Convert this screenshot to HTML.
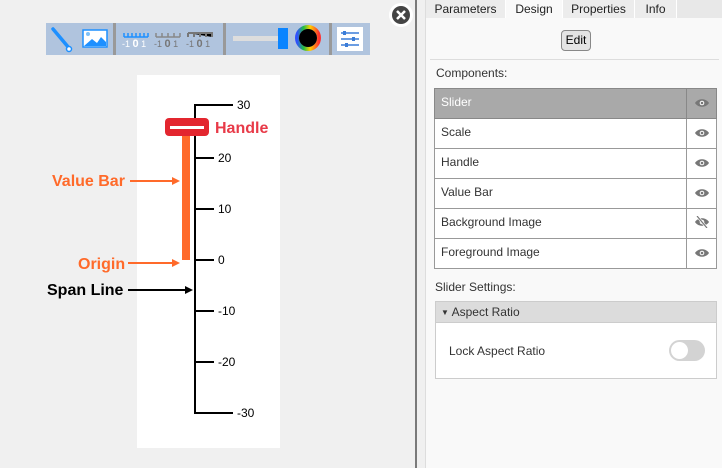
<!DOCTYPE html><html><head><style>
*{margin:0;padding:0;box-sizing:border-box}
body{width:722px;height:468px;overflow:hidden;background:#f0f0f0;font-family:"Liberation Sans",sans-serif;position:relative}
.abs{position:absolute}
#rp{left:425px;top:0;width:297px;height:468px;background:#f9f9f9;border-left:1px solid #ddd}
.tabs{position:absolute;left:0;top:0;width:297px;height:18px;background:#e8e8e8}
.tab{position:absolute;top:0;height:18px;font-size:12px;line-height:18px;text-align:center;color:#222;background:#ececec;border-right:1px solid #fff}
table{border-collapse:collapse;position:absolute;left:8px;top:88px;width:283px;font-size:12px}
td{border:1px solid #999;height:30px;background:#fff;color:#333;padding-left:6px;padding-bottom:3px}
td.e{width:30px;padding:0;text-align:center}
tr.sel td{background:#a9a9a9;color:#fff;border-color:#888}
</style></head><body>
<svg class="abs" style="left:0;top:0" width="422" height="468">
<rect x="415" y="0" width="2" height="468" fill="#7a7a7a"/>
<rect x="46" y="23" width="324" height="32" fill="#b0c4de"/>
<rect x="113" y="23" width="3" height="32" fill="#999"/><rect x="223" y="23" width="3" height="32" fill="#999"/><rect x="329" y="23" width="3" height="32" fill="#999"/>
<path d="M53 29 L69 48" stroke="#1e90ff" stroke-width="3.5" stroke-linecap="round"/><circle cx="69" cy="49" r="2.5" fill="#fff" stroke="#1e90ff" stroke-width="1.5"/>
<rect x="83" y="30" width="24" height="17" fill="#fff" stroke="#1e90ff" stroke-width="1.5"/><path d="M84 46 L92 39 L97 43 L101 37 L106 42 L106 46Z" fill="#1e90ff"/><circle cx="88" cy="34" r="2" fill="#7ec0f8"/>
<g font-size="9" font-family="Liberation Sans"><path d="M124 37h24M124 33v4M128 33v4M132 33v4M136 33v4M140 33v4M144 33v4M148 33v4" stroke="#1e90ff" stroke-width="1.5"/><text x="122" y="47" fill="#fff">-1 <tspan font-size="11" font-weight="bold">0</tspan> 1</text>
<path d="M156 37h24M156 33v4M162 33v4M168 33v4M174 33v4M180 33v4" stroke="#888" stroke-width="1.5"/><text x="154" y="47" fill="#777">-1 <tspan font-size="11" font-weight="bold">0</tspan> 1</text>
<path d="M188 33h24v4M188 33v4M194 33v4M200 33v4M206 33v4" stroke="#777" stroke-width="2"/><text x="186" y="47" fill="#777">-1 <tspan font-size="11" font-weight="bold">0</tspan> 1</text></g>
<rect x="233" y="36" width="48" height="5" fill="#ddd"/><rect x="278" y="28" width="10" height="21" fill="#0a84ff"/>
<circle cx="308" cy="38" r="11" fill="none" stroke="url(#g)" stroke-width="4"/>
<defs><linearGradient id="g"><stop offset="0" stop-color="#3050ff"/><stop offset=".3" stop-color="#20c040"/><stop offset=".6" stop-color="#ffd000"/><stop offset="1" stop-color="#ff3030"/></linearGradient></defs>
<circle cx="308" cy="38" r="9" fill="#000"/>
<rect x="337" y="27" width="26" height="24" fill="#fff"/><path d="M341 33h18M341 39h18M341 45h18" stroke="#3b7dd8" stroke-width="1.5"/><rect x="343" y="31" width="3" height="4" fill="#3b7dd8"/><rect x="352" y="37" width="3" height="4" fill="#3b7dd8"/><rect x="345" y="43" width="3" height="4" fill="#3b7dd8"/>
<circle cx="401" cy="15" r="12" fill="#fff"/><circle cx="401" cy="15" r="9" fill="#444"/><path d="M397 11l8 8M405 11l-8 8" stroke="#fff" stroke-width="2.5"/>
<rect x="137" y="75" width="143" height="373" fill="#fff"/>
<g stroke="#000" stroke-width="2"><path d="M195 104V414M194 105h39M194 413h39M194 158h20M194 209h20M194 260h20M194 311h20M194 362h20"/></g>
<g font-size="12" font-family="Liberation Sans"><text x="237" y="109">30</text><text x="218" y="162">20</text><text x="218" y="213">10</text><text x="218" y="264">0</text><text x="218" y="315">-10</text><text x="218" y="366">-20</text><text x="237" y="417">-30</text></g>
<rect x="182" y="133" width="8" height="127" fill="#ff6a2a"/>
<rect x="165" y="118" width="44" height="18" rx="4" fill="#e3262f"/><rect x="170" y="126" width="34" height="3" fill="#fff"/>
<g font-size="16" font-weight="bold" font-family="Liberation Sans"><text x="215" y="133" fill="#e83a48">Handle</text><text x="52" y="186" fill="#ff6a2a">Value Bar</text><text x="78" y="269" fill="#ff6a2a">Origin</text><text x="47" y="295" fill="#000">Span Line</text></g>
<path d="M130 181h45" stroke="#ff6a2a" stroke-width="2"/><path d="M180 181l-8-4v8z" fill="#ff6a2a"/>
<path d="M128 263h46" stroke="#ff6a2a" stroke-width="2"/><path d="M180 263l-8-4v8z" fill="#ff6a2a"/>
<path d="M128 290h58" stroke="#000" stroke-width="2"/><path d="M193 290l-8-4v8z" fill="#000"/>
</svg>
<div id="rp" class="abs">
<div class="tabs"><div class="tab" style="left:0;width:80px">Parameters</div><div class="tab" style="left:80px;width:57px;background:#f9f9f9">Design</div><div class="tab" style="left:137px;width:72px">Properties</div><div class="tab" style="left:209px;width:42px">Info</div></div>
<div class="abs" style="left:135px;top:30px;width:30px;height:21px;border:1px solid #888;border-radius:4px;background:#e4e4e4;font-size:12px;text-align:center;line-height:19px">Edit</div>
<div class="abs" style="left:4px;top:59px;width:289px;height:1px;background:#ddd"></div>
<div class="abs" style="left:10px;top:66px;font-size:12px;color:#333">Components:</div>
<svg width="0" height="0" style="position:absolute"><defs><g id="eye"><path d="M0 5C3 0 11 0 14 5C11 10 3 10 0 5Z" fill="#777"/><circle cx="7" cy="5" r="2.3" fill="#fff"/><circle cx="7" cy="5" r="1.3" fill="#777"/></g></defs></svg>
<table>
<tr class="sel"><td>Slider</td><td class="e"><svg width="14" height="10"><use href="#eye"/></svg></td></tr>
<tr><td>Scale</td><td class="e"><svg width="14" height="10"><use href="#eye"/></svg></td></tr>
<tr><td>Handle</td><td class="e"><svg width="14" height="10"><use href="#eye"/></svg></td></tr>
<tr><td>Value Bar</td><td class="e"><svg width="14" height="10"><use href="#eye"/></svg></td></tr>
<tr><td>Background Image</td><td class="e"><svg width="14" height="12"><use href="#eye" y="1"/><path d="M2 0L12 12" stroke="#fff" stroke-width="2.5"/><path d="M2 0L12 12" stroke="#777" stroke-width="1.2"/></svg></td></tr>
<tr><td>Foreground Image</td><td class="e"><svg width="14" height="10"><use href="#eye"/></svg></td></tr>
</table>
<div class="abs" style="left:9px;top:280px;font-size:12px;color:#333">Slider Settings:</div>
<div class="abs" style="left:9px;top:301px;width:282px;height:78px;border:1px solid #ccc;background:#fff">
<div style="height:21px;background:#dcdcdc;border-bottom:1px solid #ccc;font-size:12px;line-height:20px;color:#333;padding-left:5px"><span style="font-size:8px;vertical-align:1px">▼</span> Aspect Ratio</div>
<div class="abs" style="left:13px;top:42px;font-size:12px;color:#333">Lock Aspect Ratio</div>
<div class="abs" style="left:233px;top:38px;width:36px;height:21px;border-radius:11px;background:#d3d3d3"><div style="position:absolute;left:2px;top:2px;width:17px;height:17px;border-radius:50%;background:#fff"></div></div>
</div>
</div>
</body></html>
